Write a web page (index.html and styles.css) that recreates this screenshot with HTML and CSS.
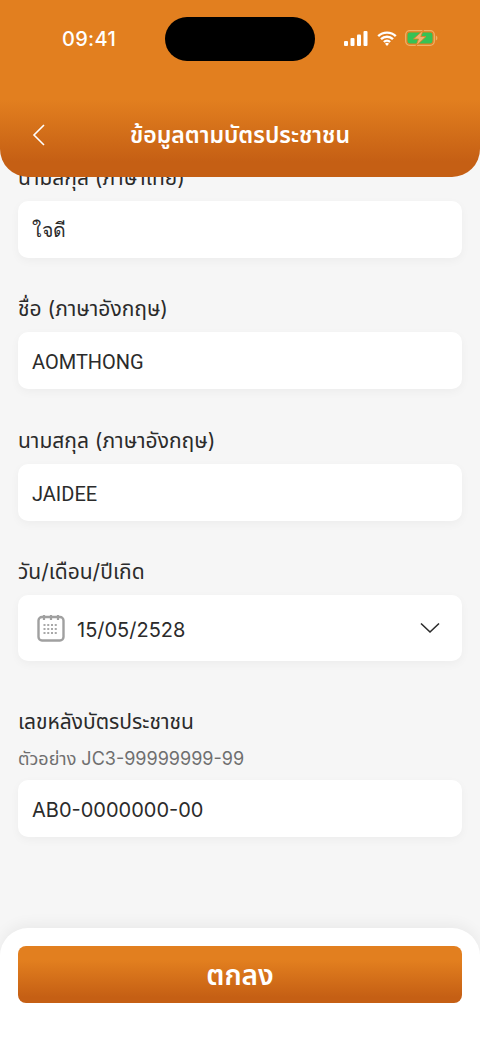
FILE: index.html
```html
<!DOCTYPE html>
<html lang="th">
<head>
<meta charset="utf-8">
<title>ข้อมูลตามบัตรประชาชน</title>
<link rel="stylesheet" href="styles.css">
</head>
<body>
<div class="app">
  <header class="header">
    <div class="status">
      <span class="time">09:41</span>
      <span class="island"></span>
      <span class="indicators">
        <svg class="sig" width="24" height="15" viewBox="0 0 24 15"><rect x="0" y="10" width="4" height="5" rx="1" fill="#fff"/><rect x="6.5" y="7" width="4" height="8" rx="1" fill="#fff"/><rect x="13" y="3.5" width="4" height="11.5" rx="1" fill="#fff"/><rect x="19.5" y="0" width="4" height="15" rx="1" fill="#fff"/></svg>
        <svg class="wifi" width="20" height="15" viewBox="0 0 20 15"><path d="M1.2 5.2a12.6 12.6 0 0 1 17.6 0M4 8.2a8.6 8.6 0 0 1 12 0M6.9 11a4.5 4.5 0 0 1 6.2 0" fill="none" stroke="#fff" stroke-width="2.4"/><path d="M10 15l-2-2.2a2.9 2.9 0 0 1 4 0z" fill="#fff"/></svg>
        <svg class="batt" width="33" height="16" viewBox="0 0 33 16"><rect x="0.7" y="0.7" width="28.6" height="14.6" rx="4" fill="none" stroke="#eeb066" stroke-width="1.3"/><rect x="2.5" y="2.5" width="25" height="11" rx="2.4" fill="#36c255"/><path d="M30.8 5.5c1.2.4 1.6 1.3 1.6 2.5s-.4 2.100-1.600 2.500z" fill="#eeb066"/><path d="M18.500 0 8.500 9h5l-2.500 7 10-9.500h-5.200z" fill="#f0b272" stroke="#e27f1f" stroke-width=".8"/></svg>
      </span>
    </div>
    <div class="nav">
      <svg class="back" width="14" height="22" viewBox="0 0 14 22"><path d="M12 1 2 11l10 10" fill="none" stroke="#fff" stroke-width="1.600"/></svg>
      <h1 class="title">ข้อมูลตามบัตรประชาชน</h1>
    </div>
  </header>

  <main class="form">
    <div class="field">
      <label class="label">นามสกุล (ภาษาไทย)</label>
      <div class="input"><span class="value value-th">ใจดี</span></div>
    </div>
    <div class="field">
      <label class="label">ชื่อ (ภาษาอังกฤษ)</label>
      <div class="input"><span class="value">AOMTHONG</span></div>
    </div>
    <div class="field">
      <label class="label">นามสกุล (ภาษาอังกฤษ)</label>
      <div class="input"><span class="value">JAIDEE</span></div>
    </div>
    <div class="field">
      <label class="label">วัน/เดือน/ปีเกิด</label>
      <div class="input date">
        <svg class="cal" width="28" height="28" viewBox="0 0 28 28"><rect x="1.500" y="3" width="25" height="23.500" rx="3.500" fill="none" stroke="#a0a0a0" stroke-width="2.400"/><path d="M7 1v5M14 1v5M21 1v5" stroke="#a0a0a0" stroke-width="2.200"/><path d="M6.500 11h15M6.500 15h15M6.500 19h15M6.500 23h0" fill="none" stroke="#a8a8a8" stroke-width="2" stroke-dasharray="2 1.750"/></svg>
        <span class="value value-num">15/05/2528</span>
        <svg class="chev" width="20" height="12" viewBox="0 0 20 12"><path d="M1 1.500 10 10l9-8.500" fill="none" stroke="#2b2b2b" stroke-width="1.600"/></svg>
      </div>
    </div>
    <div class="field field-card">
      <label class="label">เลขหลังบัตรประชาชน</label>
      <p class="hint">ตัวอย่าง JC3-99999999-99</p>
      <div class="input"><span class="value value-num">AB0-0000000-00</span></div>
    </div>
  </main>

  <footer class="footer">
    <button class="submit" type="button">ตกลง</button>
  </footer>
</div>
</body>
</html>
```
FILE: styles.css
```css
* { box-sizing: border-box; }
html, body { margin: 0; padding: 0; }
body {
  font-family: "Inter", "Noto Sans", "Noto Sans Thai", "DejaVu Sans", sans-serif;
  background: #f6f6f6;
  color: #2b2b2b;
}
.app {
  position: relative;
  width: 480px;
  height: 1044px;
  display: flex;
  flex-direction: column;
  overflow: hidden;
}
.header {
  position: absolute;
  top: 0;
  left: 0;
  right: 0;
  z-index: 2;
  height: 177px;
  padding: 17px 0 0;
  border-radius: 0 0 28px 28px;
  background: linear-gradient(180deg, #e27f1f 0, #e27f1f 100px, #c55f14 162px);
  color: #fff;
}
.status {
  display: flex;
  align-items: center;
  height: 44px;
  padding: 0 42px 0 62px;
}
.time {
  width: 103px;
  font-size: 20px;
  font-weight: 500;
  line-height: 44px;
  letter-spacing: .3px;
}
.island {
  width: 150px;
  height: 44px;
  border-radius: 22px;
  background: #000;
}
.indicators {
  margin-left: auto;
  display: flex;
  align-items: center;
  gap: 8px;
  margin-top: -2px;
}
.sig { margin-right: 1px; }
.nav {
  position: relative;
  display: flex;
  align-items: center;
  justify-content: center;
  height: 40px;
  margin-top: 54px;
}
.back { position: absolute; left: 32px; top: 9px; }
.title {
  margin: 0;
  font-size: 23px;
  font-weight: 600;
  line-height: 40px;
}
.form {
  flex: 1;
  display: flex;
  flex-direction: column;
  padding: 166px 18px 0;
}
.field { margin-bottom: 39.3px; }
.field-card { margin-top: 9px; }
.label {
  display: block;
  height: 35px;
  font-size: 21px;
  line-height: 24px;
  color: #2b2b2b;
}
.hint {
  margin: 7px 0 15px;
  height: 13px;
  font-size: 18px;
  line-height: 13px;
  color: #6f6f6f;
}
.input {
  display: flex;
  align-items: center;
  height: 57px;
  padding: 0 14px;
  background: #fff;
  border-radius: 10px;
  box-shadow: 0 3px 10px rgba(0, 0, 0, .04);
}
.value {
  padding-top: 3px;
  font-family: "Roboto", "Noto Sans", sans-serif;
  font-size: 20px;
  color: #2b2b2b;
}
.value-num { font-family: "Inter", "Noto Sans", sans-serif; }
.value-th { font-family: "Inter", "Noto Sans", sans-serif; font-size: 19.5px; padding-top: 2px; }
.date { height: 66.5px; padding: 0 22px 0 19px; gap: 12px; }
.cal { flex: none; }
.chev { margin-left: auto; }
.footer {
  position: relative;
  height: 116px;
  padding: 18px 18px 0;
  background: #fff;
  border-radius: 28px 28px 0 0;
  box-shadow: 0 -4px 14px rgba(0, 0, 0, .05);
}
.submit {
  display: block;
  width: 100%;
  height: 57px;
  padding: 3px 0 0;
  border: 0;
  border-radius: 8px;
  background: linear-gradient(180deg, #e27f1f 0, #e27f1f 25%, #c55f14 90%);
  color: #fff;
  font-family: inherit;
  font-size: 28px;
  font-weight: 600;
}
```
